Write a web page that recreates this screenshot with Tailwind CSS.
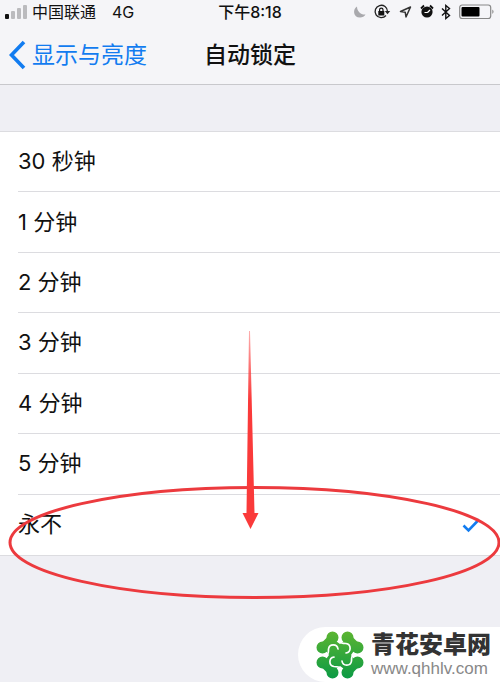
<!DOCTYPE html>
<html lang="zh-CN">
<head>
    <meta charset="UTF-8">
    <meta name="viewport" content="width=device-width, initial-scale=1.0">
    <title>自动锁定</title>
    <script src="https://cdn.jsdelivr.net/npm/@tailwindcss/browser@4"></script>
</head>
<body class="relative min-h-screen overflow-x-hidden bg-[#efeff4] font-['Inter','Noto_Sans_CJK_SC',sans-serif] text-[#111]">

    <!-- Header -->
    <header class="h-[85px] border-b border-[#c8c8cc] bg-[#f5f5f8]">
        <!-- Status bar -->
        <div class="grid h-6 grid-cols-[1fr_auto_1fr] items-center px-1 text-base leading-6">
            <div class="flex items-center">
                <svg class="mr-1 h-4 w-6" viewBox="0 0 24 16" aria-hidden="true">
                    <rect x="1" y="10" width="4" height="5" rx="1" fill="#111"/>
                    <rect x="7" y="7" width="4" height="8" rx="1" fill="#bbbbbe"/>
                    <rect x="13" y="4" width="4" height="11" rx="1" fill="#bbbbbe"/>
                    <rect x="19" y="1" width="4" height="14" rx="1" fill="#bbbbbe"/>
                </svg>
                <span>中国联通</span>
                <span class="ml-4">4G</span>
            </div>
            <time class="font-medium">下午8:18</time>
            <div class="flex justify-end">
                <svg class="h-6 w-36" viewBox="352 0 144 24" fill="none" aria-hidden="true">
                    <!-- moon -->
                    <path d="M357 6.500C352.500 9 353 17.500 360 17.500C362.500 17.500 364.500 16.500 365.500 14.500C361 15 357 11.500 357 6.500z" fill="#a9a9ad"/>
                    <!-- rotation lock -->
                    <path d="M386 15.500A6.200 6.200 0 1 1 387.500 11.500" stroke="#222" stroke-width="1.300"/>
                    <path d="M384.800 11h5.400l-2.700 3.300z" fill="#222"/>
                    <rect x="378.300" y="11" width="6" height="4.500" fill="#111"/>
                    <path d="M379.600 11V9.800a1.700 1.700 0 0 1 3.400 0V11" stroke="#111" stroke-width="1.200"/>
                    <!-- location -->
                    <path d="M400.500 11.500l10-4.500-4.500 10-.8-4.800z" stroke="#333" stroke-width="1.500" stroke-linejoin="round"/>
                    <!-- alarm -->
                    <circle cx="427" cy="12" r="5.600" fill="#111"/>
                    <path d="M421 8.500l3-3M433 8.500l-3-3" stroke="#111" stroke-width="1.800"/>
                    <path d="M427.500 12.500l2.500-2.500M427.500 12.500h-3" stroke="#fff" stroke-width="1.200"/>
                    <!-- bluetooth -->
                    <path d="M442 8.500l7.500 7-3.700 3V5.500l3.700 3-7.500 7" stroke="#111" stroke-width="1.400"/>
                    <!-- battery -->
                    <rect x="459.700" y="5" width="31" height="13.500" rx="2.500" stroke="#888" stroke-width="1.200"/>
                    <rect x="461.500" y="7" width="18" height="9.500" rx="1" fill="#000"/>
                    <path d="M492.300 9.500q2.500 2.200 0 4.500z" fill="#888"/>
                </svg>
            </div>
        </div>

        <!-- Navigation -->
        <nav class="grid h-[62px] grid-cols-[1fr_auto_1fr] items-center px-2 text-[23px] leading-8">
            <a href="#" class="flex items-center text-[#127cf0]">
                <svg class="mr-1 h-8 w-5" viewBox="0 0 20 32" fill="none" aria-hidden="true">
                    <path d="M16 3L3.500 16L16 29" stroke="currentColor" stroke-width="3.600"/>
                </svg>
                显示与亮度
            </a>
            <h1 class="font-medium">自动锁定</h1>
        </nav>
    </header>

    <!-- Lock time options -->
    <main class="mt-[46px]">
        <form class="grid h-[425px] grid-rows-7 border-y border-[#dcdce0] bg-white pl-[18px] text-[22px]">
            <label class="flex items-center justify-between border-b border-[#dcdce0] pr-5">
                30 秒钟
                <input type="radio" name="lock" class="peer sr-only">
            </label>
            <label class="flex items-center justify-between border-b border-[#dcdce0] pr-5">
                1 分钟
                <input type="radio" name="lock" class="peer sr-only">
            </label>
            <label class="flex items-center justify-between border-b border-[#dcdce0] pr-5">
                2 分钟
                <input type="radio" name="lock" class="peer sr-only">
            </label>
            <label class="flex items-center justify-between border-b border-[#dcdce0] pr-5">
                3 分钟
                <input type="radio" name="lock" class="peer sr-only">
            </label>
            <label class="flex items-center justify-between border-b border-[#dcdce0] pr-5">
                4 分钟
                <input type="radio" name="lock" class="peer sr-only">
            </label>
            <label class="flex items-center justify-between border-b border-[#dcdce0] pr-5">
                5 分钟
                <input type="radio" name="lock" class="peer sr-only">
            </label>
            <label class="flex items-center justify-between pr-5">
                永不
                <input type="radio" name="lock" class="peer sr-only" checked>
                <svg class="invisible h-4 w-[18px] peer-checked:visible" viewBox="0 0 18 16" fill="none" aria-hidden="true">
                    <path d="M1.500 8.500l5 5L17 2.500" stroke="#127cf0" stroke-width="2.600"/>
                </svg>
            </label>
        </form>
    </main>

    <!-- Arrow and ellipse drawn over the list -->
    <svg class="pointer-events-none absolute left-1/2 top-0 h-[682px] w-[500px] -translate-x-1/2" viewBox="0 0 500 682" fill="none" aria-hidden="true">
        <defs>
            <linearGradient id="fade" x1="0" y1="330" x2="0" y2="400" gradientUnits="userSpaceOnUse">
                <stop stop-color="#fa3a3a" stop-opacity=".4"/>
                <stop offset="1" stop-color="#fa3a3a"/>
            </linearGradient>
        </defs>
        <ellipse cx="254.500" cy="542.500" rx="244.500" ry="55" stroke="#ec3a3e" stroke-width="3"/>
        <path d="M249 331h1L254.500 513h4l-8 16-8-16h4z" fill="url(#fade)"/>
    </svg>

    <!-- Site badge -->
    <footer class="absolute right-0 top-[627px] flex h-[55px] w-[202px] items-center rounded-l-full bg-white pl-[18px]">
        <svg class="mr-[7px] h-12 w-12 shrink-0" viewBox="0 0 48 48" fill="none" aria-hidden="true">
            <defs>
                <linearGradient id="leaf" x1="0" y1="0" x2="0" y2="48" gradientUnits="userSpaceOnUse">
                    <stop stop-color="#5cb531"/>
                    <stop offset="1" stop-color="#0b9a45"/>
                </linearGradient>
            </defs>
            <g stroke="url(#leaf)" stroke-linecap="round">
                <path d="M16.500 6.500h.01M31.500 6.500h.01M6.500 16.500h.01M41.500 16.500h.01M6.500 31.500h.01M41.500 31.500h.01M16.500 41.500h.01M31.500 41.500h.01" stroke-width="12"/>
                <path d="M16.500 6.500L6.500 16.500M31.500 6.500L41.500 16.500M6.500 31.500L16.500 41.500M41.500 31.500L31.500 41.500" stroke-width="8"/>
            </g>
            <path d="M17 8L24 13L31 8L40 17L35 24L40 31L31 40L24 35L17 40L8 31L13 24L8 17z" fill="url(#leaf)"/>
            <g stroke="#fff" stroke-width="1.700" stroke-linecap="round">
                <path d="M23 9C25 12.500 26 12.500 30 12.500A4.800 4.800 0 0 1 30 22"/>
                <path d="M39 23C35.500 25 35.500 26 35.500 30A4.800 4.800 0 0 1 26 30"/>
                <path d="M25 39C23 35.500 22 35.500 18 35.500A4.800 4.800 0 0 1 18 26"/>
                <path d="M9 25C12.500 23 12.500 22 12.500 18A4.800 4.800 0 0 1 22 18"/>
            </g>
        </svg>
        <div class="whitespace-nowrap">
            <p class="text-2xl font-black leading-7 text-[#333]">青花安卓网</p>
            <p class="font-['Liberation_Sans'] text-[17px] leading-5 text-[#888]">www.qhhlv.com</p>
        </div>
    </footer>
</body>
</html>
